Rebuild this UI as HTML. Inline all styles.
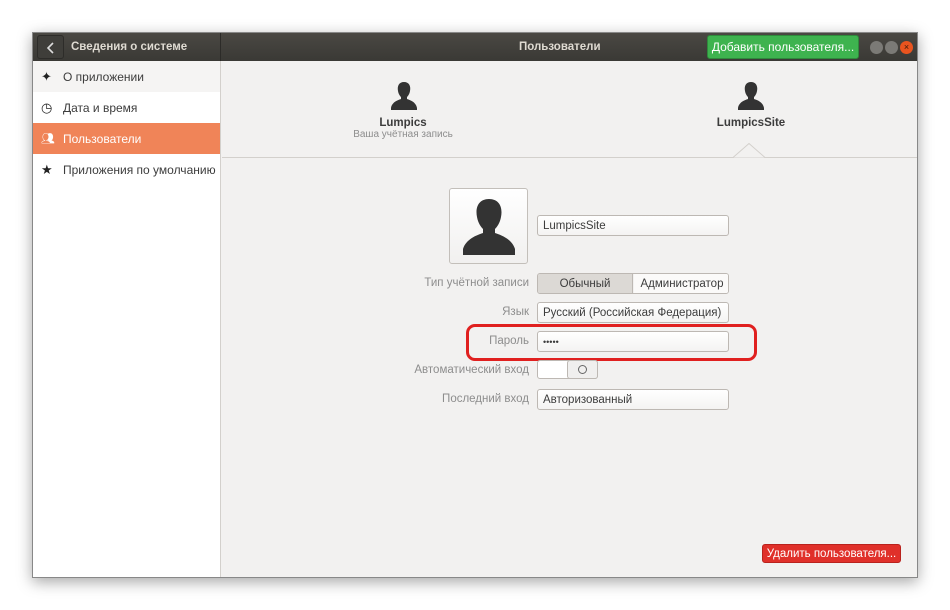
<!DOCTYPE html>
<html><head><meta charset="utf-8"><style>
*{margin:0;padding:0;box-sizing:border-box}
body{width:950px;height:610px;background:#fff;font-family:"Liberation Sans","DejaVu Sans",sans-serif;position:relative;overflow:hidden}
.win{position:absolute;left:32px;top:32px;width:886px;height:546px;background:#f2f1f0;box-shadow:0 4px 14px rgba(0,0,0,.35);border:1px solid #888}
.hdr{position:absolute;left:0;top:0;width:884px;height:28px;background:linear-gradient(#4a4843,#3a3935);color:#dfdbd2;font-size:12px}
.hdr .l{position:absolute;left:0;top:0;width:188px;height:28px;border-right:1px solid #2c2b28}
.back{position:absolute;left:4px;top:2px;width:27px;height:24px;border:1px solid #2d2c29;border-radius:3px;background:#3f3e3a}
.sb{position:absolute;left:0;top:28px;width:188px;height:516px;background:#fff;border-right:1px solid #d3d0cc}
.it{height:31px;line-height:32px;font-size:12px;color:#3c3c3c;padding-left:30px;position:relative}
.it .ic{position:absolute;left:8px;top:0;font-size:13px;color:#222}
.it.sel{background:#f08458;color:#fff}
.t{position:absolute;font-size:11.5px;color:#3c3c3c}
.lbl{position:absolute;font-size:11.5px;color:#8d8d8d;text-align:right;width:200px}
.fld{position:absolute;left:505px;width:192px;height:21px;border:1px solid #bdb8b3;border-radius:3px;background:linear-gradient(#fff,#f4f3f2);font-size:11.5px;color:#3c3c3c;line-height:21px;padding-left:5px}
</style></head><body>
<div class="win">
 <div class="hdr">
  <div class="l"><div class="back"><svg width="27" height="24"><path d="M15 7l-5 5 5 5" stroke="#ddd" stroke-width="1.6" fill="none"/></svg></div>
  <div style="position:absolute;left:38px;top:8px;font-weight:bold;font-size:11.5px">Сведения о системе</div></div>
  <div style="position:absolute;left:486px;top:8px;font-weight:bold;font-size:11.5px">Пользователи</div>
  <div style="position:absolute;left:674px;top:2px;width:152px;height:24px;background:#3eb34f;border:1px solid #2f8a3c;border-radius:3px;color:#fff;font-size:12px;line-height:23px;text-align:center">Добавить пользователя...</div>
  <div style="position:absolute;left:837px;top:8px;width:13px;height:13px;border-radius:50%;background:#7b7a76"></div>
  <div style="position:absolute;left:852px;top:8px;width:13px;height:13px;border-radius:50%;background:#7b7a76"></div>
  <div style="position:absolute;left:867px;top:8px;width:13px;height:13px;border-radius:50%;background:#e9541f;color:#3a1a0a;font-size:9px;line-height:13px;text-align:center">×</div>
 </div>
 <div class="sb">
  <div class="it" style="background:#f5f4f3"><span class="ic">✦</span>О приложении</div>
  <div class="it"><span class="ic">◷</span>Дата и время</div>
  <div class="it sel"><span class="ic" style="color:#fff;font-size:11px">👥︎</span>Пользователи</div>
  <div class="it"><span class="ic">★</span>Приложения по умолчанию</div>
 </div>
 <div style="position:absolute;left:189px;top:124px;width:695px;height:1px;background:#d3d0cc"></div>
 <svg style="position:absolute;left:700px;top:110px" width="36" height="16"><path d="M0 14.5L16 0.5 32 14.5" fill="#f2f1f0" stroke="#d3d0cc"/></svg>
 <svg style="position:absolute;left:356px;top:48px" width="30" height="30"><path d="M15 1c-5 0-7 4-6 9 .5 3 2 5 3 6v2c-3 1-9 3-10 9v2h26v-2c-1-6-7-8-10-9v-2c1-1 2.5-3 3-6 1-5-1-9-6-9z" fill="#333"/></svg>
 <div class="t" style="left:310px;top:84px;width:120px;text-align:center;font-weight:bold">Lumpics</div>
 <div class="t" style="left:300px;top:96px;width:140px;text-align:center;color:#8d8d8d;font-size:10px">Ваша учётная запись</div>
 <svg style="position:absolute;left:703px;top:48px" width="30" height="30"><path d="M15 1c-5 0-7 4-6 9 .5 3 2 5 3 6v2c-3 1-9 3-10 9v2h26v-2c-1-6-7-8-10-9v-2c1-1 2.5-3 3-6 1-5-1-9-6-9z" fill="#333"/></svg>
 <div class="t" style="left:658px;top:84px;width:120px;text-align:center;font-weight:bold">LumpicsSite</div>
 <div style="position:absolute;left:416px;top:155px;width:79px;height:76px;border:1px solid #c3bfba;border-radius:3px;background:linear-gradient(#fff,#f1f0ef)">
  <svg style="position:absolute;left:10px;top:8px" width="58" height="60"><path d="M29 2c-10 0-14 8-12 18 1 6 4 10 6 12v4c-6 2-17 6-20 16v6h52v-6c-3-10-14-14-20-16v-4c2-2 5-6 6-12 2-10-2-18-12-18z" fill="#333"/></svg>
 </div>
 <div class="fld" style="top:182px;left:504px">LumpicsSite</div>
 <div class="lbl" style="left:296px;top:244px">Тип учётной записи</div>
 <div style="position:absolute;left:504px;top:240px;width:192px;height:21px;border:1px solid #bdb8b3;border-radius:3px;overflow:hidden;font-size:11.5px;color:#3c3c3c;line-height:20px">
  <div style="position:absolute;left:0;top:0;width:95px;height:19px;background:#dcd9d5;text-align:center;border-right:1px solid #bdb8b3">Обычный</div>
  <div style="position:absolute;left:96px;top:0;width:96px;height:19px;background:#fbfaf9;text-align:center">Администратор</div>
 </div>
 <div class="lbl" style="left:296px;top:273px">Язык</div>
 <div class="fld" style="top:269px;left:504px">Русский (Российская Федерация)</div>
 <div class="lbl" style="left:296px;top:302px">Пароль</div>
 <div class="fld" style="top:298px;left:504px;font-size:9px">•••••</div>
 <div style="position:absolute;left:433px;top:291px;width:291px;height:37px;border:3px solid #e0201f;border-radius:9px"></div>
 <div class="lbl" style="left:296px;top:331px">Автоматический вход</div>
 <div style="position:absolute;left:504px;top:327px;width:61px;height:19px;border:1px solid #bdb8b3;border-radius:3px;background:#fff">
  <div style="position:absolute;left:29px;top:-1px;width:31px;height:19px;border:1px solid #bdb8b3;border-radius:3px;background:#f0efee"></div>
  <div style="position:absolute;left:40px;top:4px;width:9px;height:9px;border:1px solid #666;border-radius:50%"></div>
 </div>
 <div class="lbl" style="left:296px;top:360px">Последний вход</div>
 <div class="fld" style="top:356px;left:504px">Авторизованный</div>
 <div style="position:absolute;left:729px;top:511px;width:139px;height:19px;background:#e0302a;border:1px solid #b9221d;border-radius:3px;color:#fff;font-size:11.5px;line-height:18px;text-align:center">Удалить пользователя...</div>
</div>
</body></html>
